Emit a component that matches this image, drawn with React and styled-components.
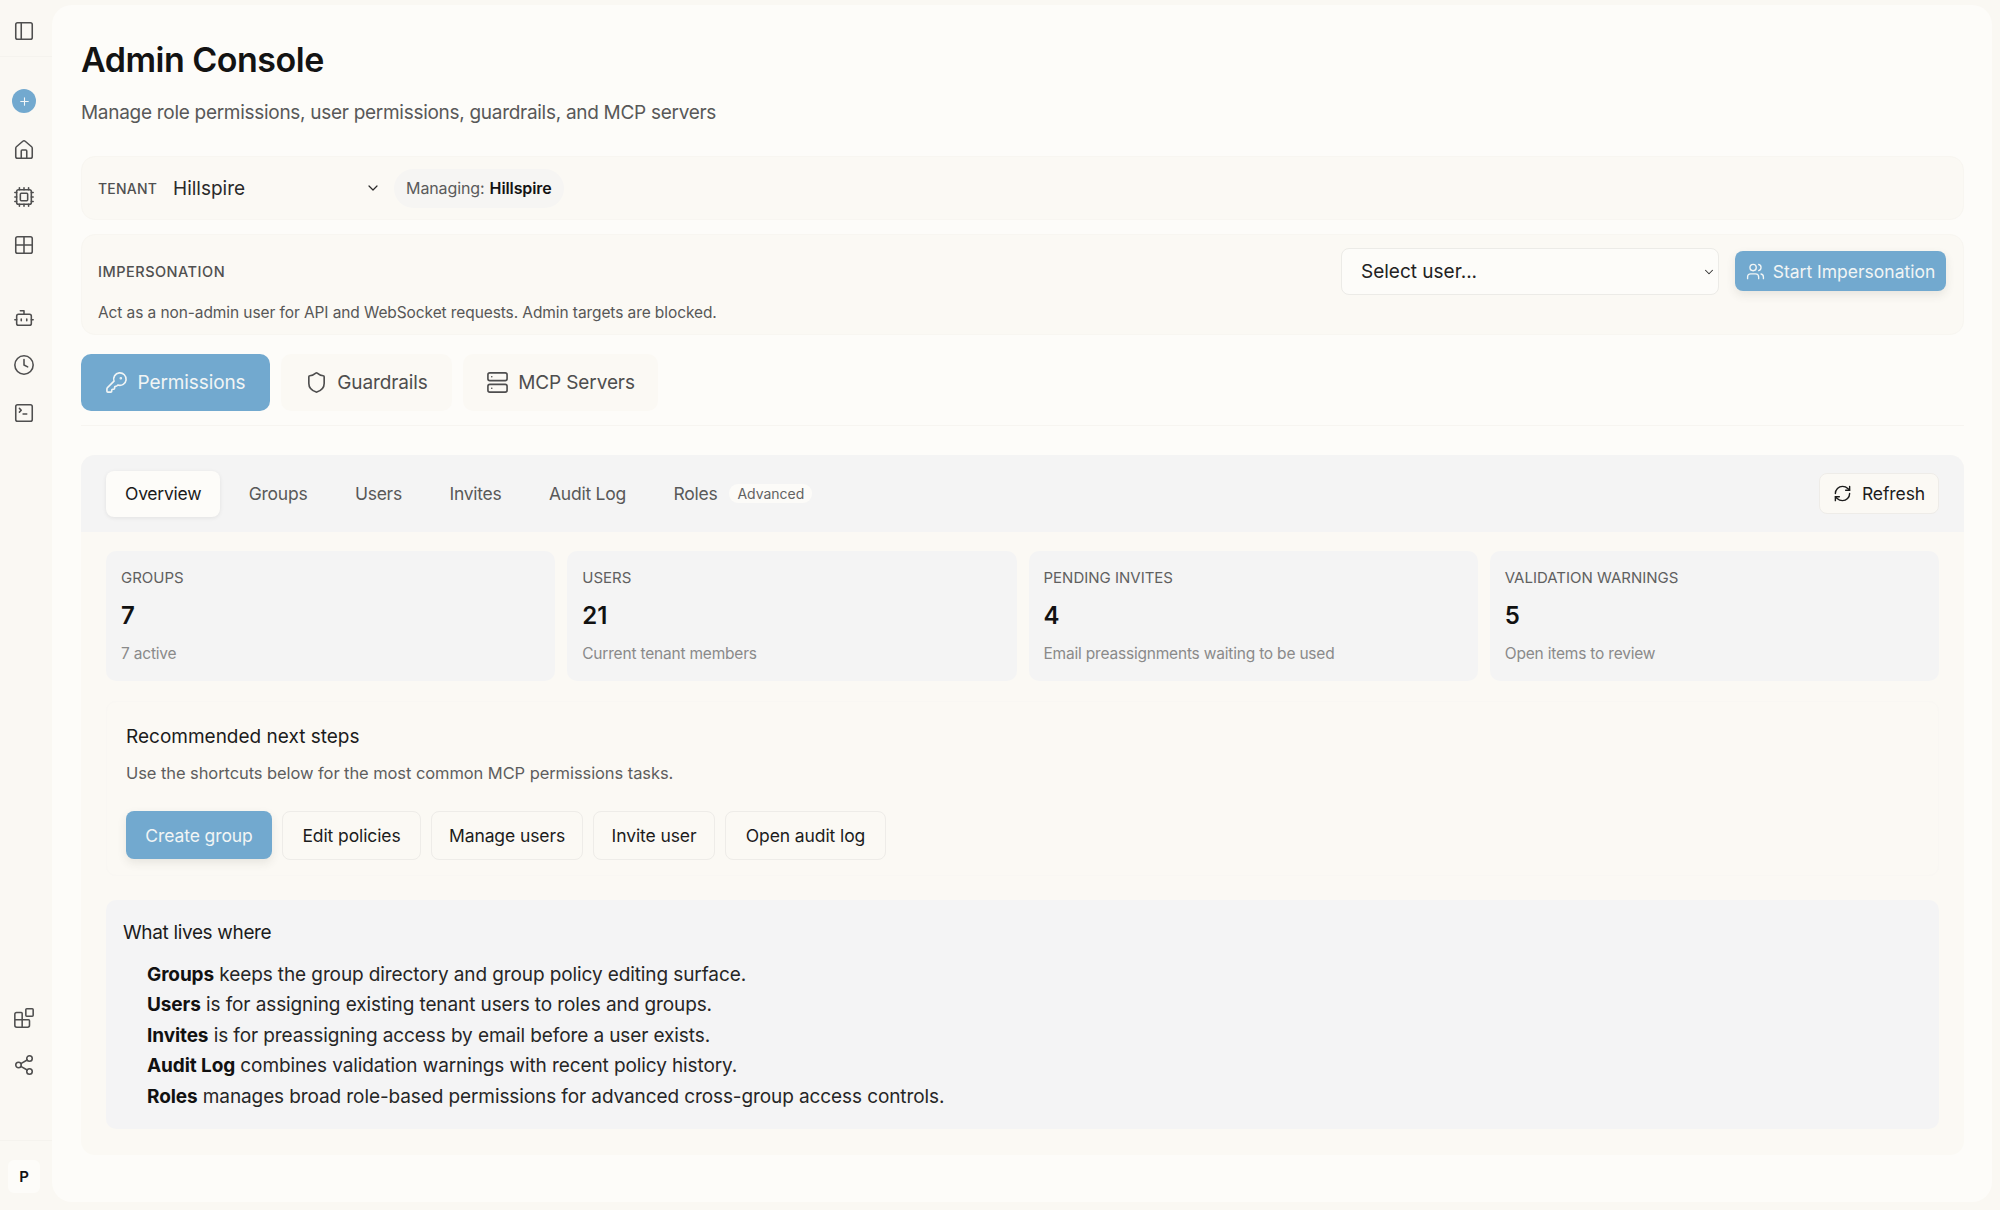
import React from 'react'
import styled, { createGlobalStyle } from 'styled-components'
import {
  PanelLeft,
  Plus,
  House,
  Cpu,
  Grid2x2,
  Bot,
  Clock,
  SquareTerminal,
  Blocks,
  Share2,
  ChevronDown,
  Users,
  KeyRound,
  Shield,
  Server,
  RefreshCw,
} from 'lucide-react'

const GlobalStyle = createGlobalStyle`
  html, body {
    margin: 0;
    height: 100%;
    background: #faf8f3;
  }
  body {
    font-family: Inter, "Open Sans", sans-serif;
    color: #131313;
    overflow: hidden;
  }
  * {
    box-sizing: border-box;
  }
`

const Shell = styled.div`
  display: flex;
  height: 1210px;
  width: 2000px;
`

const Rail = styled.aside`
  width: 52px;
  flex: none;
  padding-right: 4px;
  display: flex;
  flex-direction: column;
  color: #4f4f4f;
`

const RailTop = styled.div`
  height: 57px;
  margin-right: -4px;
  padding: 5px 4px 0 0;
  display: flex;
  align-items: center;
  justify-content: center;
  border-bottom: 1px solid #f5f3ee;
`

const RailGroup = styled.div`
  display: flex;
  flex-direction: column;
  align-items: center;
  gap: 25.5px;
  margin-top: ${p => p.$top}px;
`

const AddButton = styled.div`
  width: 24px;
  height: 24px;
  border-radius: 50%;
  background: #72a9cf;
  color: #f3f7f8;
  display: flex;
  align-items: center;
  justify-content: center;
`

const RailSpacer = styled.div`
  flex: 1;
`

const RailBottom = styled.div`
  margin: 64px -4px 0 0;
  height: 70px;
  padding: 19px 4px 0 0;
  border-top: 1px solid #f5f3ee;
  display: flex;
  justify-content: center;
`

const Avatar = styled.div`
  width: 32px;
  height: 33px;
  border-radius: 6px;
  background: #fdfcf9;
  color: #131313;
  display: flex;
  align-items: center;
  justify-content: center;
  font-size: 15px;
  font-weight: 600;
`

const Main = styled.main`
  flex: 1;
  margin: 5px 8px 8px 0;
  padding: 0 28px 0 29px;
  background: #fdfcf9;
  border-radius: 20px;
`

const Title = styled.h1`
  margin: 0;
  padding-top: 33px;
  font-size: 34px;
  line-height: 44px;
  font-weight: 600;
  letter-spacing: -0.5px;
`

const Subtitle = styled.p`
  margin: 0;
  padding-top: 17px;
  font-size: 19px;
  line-height: 28px;
  color: #585858;
  letter-spacing: -0.29px;
`

const Card = styled.section`
  background: #fbf9f4;
  border: 1px solid #f8f6f1;
  border-radius: 14px;
`

const TenantCard = styled(Card)`
  height: 64px;
  margin-top: 29px;
  padding: 0 16px;
  display: flex;
  align-items: center;
`

const Label = styled.span`
  font-size: 14.5px;
  font-weight: 500;
  letter-spacing: 0.5px;
  color: #505050;
  text-transform: uppercase;
`

const TenantLabel = styled(Label)`
  font-size: 14px;
  letter-spacing: 0.2px;
`

const TenantSelect = styled.div`
  width: 212px;
  margin-left: 16px;
  display: flex;
  align-items: center;
  justify-content: space-between;
  padding-right: 4px;
  font-size: 19px;
  color: #2a2a2a;
`

const ManagingPill = styled.div`
  height: 39px;
  margin-left: 9px;
  padding: 0 12px;
  display: flex;
  align-items: center;
  gap: 5px;
  border-radius: 20px;
  background: #f6f5f3;
  font-size: 16px;
  letter-spacing: -0.1px;
  color: #5a5a5a;
  b {
    font-weight: 600;
    color: #131313;
  }
`

const ImpersonationCard = styled(Card)`
  height: 101px;
  margin-top: 14px;
  padding: 12px 17px 0 16px;
`

const ImpersonationRow = styled.div`
  display: flex;
  align-items: center;
  justify-content: space-between;
  height: 48px;
`

const Hint = styled.p`
  margin: 7px 0 0;
  font-size: 15.5px;
  line-height: 22px;
  letter-spacing: -0.09px;
  color: #575757;
`

const Controls = styled.div`
  display: flex;
  align-items: center;
  gap: 16px;
`

const SelectWrap = styled.div`
  position: relative;
  color: #333;
  svg {
    position: absolute;
    right: 3px;
    top: 17px;
    pointer-events: none;
  }
`

const UserSelect = styled.select`
  display: block;
  width: 378px;
  height: 47px;
  padding: 0 19px;
  appearance: none;
  border: 1px solid #ecebe7;
  border-radius: 8px;
  background: #fdfcf9;
  font-family: inherit;
  font-size: 19px;
  color: #222;
`

const PrimaryButton = styled.button`
  display: inline-flex;
  align-items: center;
  justify-content: center;
  gap: 8px;
  border: 0;
  border-radius: 8px;
  background: #72a9cf;
  color: #f1f5f5;
  font-family: inherit;
  box-shadow: 0 4px 10px rgba(60, 60, 50, 0.1);
`

const StartButton = styled(PrimaryButton)`
  width: 211px;
  height: 40px;
  font-size: 17.5px;
`

const MainTabs = styled.div`
  margin-top: 19px;
  display: flex;
  gap: 11px;
  padding-bottom: 14px;
  border-bottom: 1px solid #f7f5f1;
`

const MainTab = styled.button`
  height: 57px;
  width: ${p => p.$w}px;
  display: inline-flex;
  align-items: center;
  justify-content: center;
  gap: 9px;
  border: 0;
  border-radius: 10px;
  font-family: inherit;
  font-size: 19px;
  letter-spacing: -0.1px;
  background: ${p => (p.$active ? '#72a9cf' : '#fbf9f4')};
  color: ${p => (p.$active ? '#f1f5f5' : '#4e4e4e')};
`

const Panel = styled(Card)`
  margin-top: 29px;
  height: 700px;
  overflow: hidden;
  border: 0;
`

const PanelBar = styled.div`
  height: 77px;
  padding: 0 25px;
  display: flex;
  align-items: center;
  background: #f4f4f4;
`

const SubTabs = styled.div`
  flex: 1;
  display: flex;
  align-items: center;
  gap: 9.5px;
`

const SubTab = styled.div`
  height: 46px;
  padding: 0 19px;
  display: flex;
  align-items: center;
  gap: 12px;
  border-radius: 8px;
  font-size: 17.5px;
  letter-spacing: -0.25px;
  background: ${p => (p.$active ? '#fdfcf9' : 'transparent')};
  color: ${p => (p.$active ? '#1a1a1a' : '#595959')};
  box-shadow: ${p => (p.$active ? '0 1px 4px rgba(0, 0, 0, 0.08)' : 'none')};
`

const Tag = styled.span`
  height: 19px;
  padding: 0 8px;
  display: flex;
  align-items: center;
  border-radius: 9px;
  background: #fcfbf8;
  font-size: 14px;
  letter-spacing: 0;
  color: #626262;
`

const RefreshButton = styled.button`
  width: 120px;
  height: 41px;
  display: inline-flex;
  align-items: center;
  justify-content: center;
  gap: 10px;
  border: 1px solid #eeece8;
  border-radius: 8px;
  background: #fbf9f4;
  color: #1c1c1c;
  font-family: inherit;
  font-size: 17.5px;
  letter-spacing: -0.1px;
`

const PanelBody = styled.div`
  padding: 19px 25px 0;
`

const StatGrid = styled.div`
  display: grid;
  grid-template-columns: repeat(4, 1fr);
  gap: 12px;
`

const StatCard = styled.div`
  height: 130px;
  padding: 16px 14px 0 15px;
  border-radius: 10px;
  background: #f4f4f4;
`

const StatLabel = styled.div`
  font-size: 15px;
  line-height: 22px;
  color: #606060;
  text-transform: uppercase;
`

const StatValue = styled.div`
  margin-top: 10px;
  font-size: 24px;
  line-height: 34px;
  font-weight: 600;
  color: #111;
`

const StatNote = styled.div`
  margin-top: 10px;
  font-size: 15.5px;
  line-height: 22px;
  letter-spacing: -0.2px;
  color: #8a8a8a;
`

const NextSteps = styled.div`
  height: 175px;
  margin-top: 20px;
  padding: 23px 19px 0;
  border: 1px solid #f9f7f3;
  border-radius: 10px;
`

const SectionTitle = styled.h3`
  margin: 0;
  font-size: 19px;
  line-height: 24px;
  font-weight: 400;
  letter-spacing: ${p => p.$tracking}px;
  color: #1c1c1c;
`

const SectionHint = styled.p`
  margin: 12px 0 0;
  font-size: 16.5px;
  line-height: 24px;
  letter-spacing: -0.08px;
  color: #5e5e5e;
`

const StepRow = styled.div`
  margin-top: 26px;
  display: flex;
  gap: 10px;
`

const CreateButton = styled(PrimaryButton)`
  width: 146px;
  height: 48px;
  font-size: 17.5px;
  letter-spacing: -0.1px;
`

const StepButton = styled.button`
  height: 49px;
  width: ${p => p.$w}px;
  border: 1px solid #eeece8;
  border-radius: 8px;
  background: #fbf9f4;
  color: #1c1c1c;
  font-family: inherit;
  font-size: 17.5px;
  letter-spacing: -0.1px;
`

const Explainer = styled.div`
  height: 229px;
  margin-top: 24px;
  padding: 21px 17px 0;
  border-radius: 10px;
  background: #f4f4f5;
`

const ExplainerList = styled.ul`
  margin: 15px 0 0;
  padding: 0 0 0 24px;
  list-style: none;
  font-size: 19px;
  line-height: 30.4px;
  letter-spacing: -0.1px;
  color: #262626;
  b {
    font-weight: 700;
    color: #111;
  }
`

const TABS = [
  { name: 'Permissions', icon: KeyRound, w: 189, active: true },
  { name: 'Guardrails', icon: Shield, w: 171 },
  { name: 'MCP Servers', icon: Server, w: 195 },
]

const STATS = [
  { label: 'Groups', value: '7', note: '7 active' },
  { label: 'Users', value: '21', note: 'Current tenant members' },
  { label: 'Pending invites', value: '4', note: 'Email preassignments waiting to be used' },
  { label: 'Validation warnings', value: '5', note: 'Open items to review' },
]

const STEPS = [
  { name: 'Edit policies', w: 139 },
  { name: 'Manage users', w: 152 },
  { name: 'Invite user', w: 122 },
  { name: 'Open audit log', w: 161 },
]

const AREAS = [
  ['Groups', 'keeps the group directory and group policy editing surface.'],
  ['Users', 'is for assigning existing tenant users to roles and groups.'],
  ['Invites', 'is for preassigning access by email before a user exists.'],
  ['Audit Log', 'combines validation warnings with recent policy history.'],
  ['Roles', 'manages broad role-based permissions for advanced cross-group access controls.'],
]

export default function App() {
  return (
    <Shell>
      <GlobalStyle />
      <Rail>
        <RailTop>
          <PanelLeft size={22} strokeWidth={1.7} />
        </RailTop>
        <RailGroup $top={32}>
          <AddButton>
            <Plus size={13} strokeWidth={2} />
          </AddButton>
          <RailGroup $top={0}>
            <House size={22} strokeWidth={1.7} />
            <Cpu size={22} strokeWidth={1.7} />
            <Grid2x2 size={22} strokeWidth={1.7} />
          </RailGroup>
        </RailGroup>
        <RailGroup $top={51}>
          <Bot size={22} strokeWidth={1.7} />
          <Clock size={22} strokeWidth={1.7} />
          <SquareTerminal size={22} strokeWidth={1.7} />
        </RailGroup>
        <RailSpacer />
        <RailGroup $top={0}>
          <Blocks size={22} strokeWidth={1.7} />
          <Share2 size={22} strokeWidth={1.7} />
        </RailGroup>
        <RailBottom>
          <Avatar>P</Avatar>
        </RailBottom>
      </Rail>
      <Main>
        <Title>Admin Console</Title>
        <Subtitle>Manage role permissions, user permissions, guardrails, and MCP servers</Subtitle>

        <TenantCard>
          <TenantLabel>Tenant</TenantLabel>
          <TenantSelect>
            Hillspire
            <ChevronDown size={16} strokeWidth={1.8} />
          </TenantSelect>
          <ManagingPill>
            Managing: <b>Hillspire</b>
          </ManagingPill>
        </TenantCard>

        <ImpersonationCard>
          <ImpersonationRow>
            <Label>Impersonation</Label>
            <Controls>
              <SelectWrap>
                <UserSelect defaultValue="">
                  <option value="">Select user...</option>
                </UserSelect>
                <ChevronDown size={14} strokeWidth={1.8} />
              </SelectWrap>
              <StartButton>
                <Users size={19} strokeWidth={1.7} />
                Start Impersonation
              </StartButton>
            </Controls>
          </ImpersonationRow>
          <Hint>Act as a non-admin user for API and WebSocket requests. Admin targets are blocked.</Hint>
        </ImpersonationCard>

        <MainTabs>
          {TABS.map(({ name, icon: Icon, w, active }) => (
            <MainTab key={name} $w={w} $active={active}>
              <Icon size={23} strokeWidth={1.7} />
              {name}
            </MainTab>
          ))}
        </MainTabs>

        <Panel>
          <PanelBar>
            <SubTabs>
              <SubTab $active>Overview</SubTab>
              <SubTab>Groups</SubTab>
              <SubTab>Users</SubTab>
              <SubTab>Invites</SubTab>
              <SubTab>Audit Log</SubTab>
              <SubTab>
                Roles <Tag>Advanced</Tag>
              </SubTab>
            </SubTabs>
            <RefreshButton>
              <RefreshCw size={19} strokeWidth={1.8} />
              Refresh
            </RefreshButton>
          </PanelBar>
          <PanelBody>
            <StatGrid>
              {STATS.map(stat => (
                <StatCard key={stat.label}>
                  <StatLabel>{stat.label}</StatLabel>
                  <StatValue>{stat.value}</StatValue>
                  <StatNote>{stat.note}</StatNote>
                </StatCard>
              ))}
            </StatGrid>
            <NextSteps>
              <SectionTitle $tracking={0}>Recommended next steps</SectionTitle>
              <SectionHint>Use the shortcuts below for the most common MCP permissions tasks.</SectionHint>
              <StepRow>
                <CreateButton>Create group</CreateButton>
                {STEPS.map(step => (
                  <StepButton key={step.name} $w={step.w}>
                    {step.name}
                  </StepButton>
                ))}
              </StepRow>
            </NextSteps>
            <Explainer>
              <SectionTitle $tracking={-0.35}>What lives where</SectionTitle>
              <ExplainerList>
                {AREAS.map(([name, text]) => (
                  <li key={name}>
                    <b>{name}</b> {text}
                  </li>
                ))}
              </ExplainerList>
            </Explainer>
          </PanelBody>
        </Panel>
      </Main>
    </Shell>
  )
}
